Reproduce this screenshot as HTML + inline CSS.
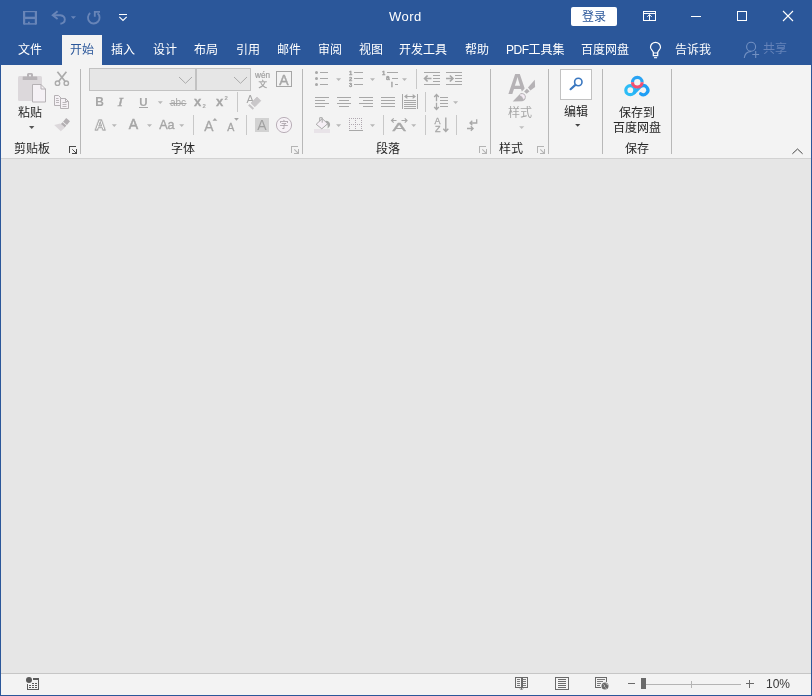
<!DOCTYPE html>
<html lang="zh-CN">
<head>
<meta charset="utf-8">
<title>Word</title>
<style>
html,body{margin:0;padding:0;}
body{width:812px;height:696px;overflow:hidden;position:relative;background:#e6e6e6;
  font-family:"Liberation Sans","Noto Sans CJK SC",sans-serif;font-size:12px;color:#262626;}
#win{position:absolute;left:0;top:0;width:812px;height:696px;overflow:hidden;}
.abs,.t,.g{position:absolute;}
.t{white-space:nowrap;line-height:16px;height:16px;font-size:12px;will-change:transform;}
#head{left:0;top:0;width:812px;height:65px;background:#2b579a;}
#ribbon{left:1px;top:65px;width:810px;height:93px;background:#f3f3f3;border-bottom:1px solid #d2d2d2;}
#doc{left:1px;top:159px;width:810px;height:513px;background:#e6e6e6;}
#status{left:1px;top:673px;width:810px;height:22px;background:#f3f3f3;border-top:1px solid #c6c6c6;}
#bl,#br,#bb{background:#2b579a;}
#bl{left:0;top:0;width:1px;height:696px;}
#br{left:811px;top:0;width:1px;height:696px;}
#bb{left:0;top:695px;width:812px;height:1px;}
.tab{color:#fff;top:42px;}
#tabsel{left:62px;top:35px;width:40px;height:31px;background:#f3f3f3;}
.sep{width:1px;background:#b8b8b8;top:69px;height:85px;}
.gl{top:141px;color:#262626;}
.dis{color:#a6a6a6;}
svg{position:absolute;overflow:visible;}
</style>
</head>
<body>
<div id="win">
  <div id="head" class="abs"></div>
  <div id="ribbon" class="abs"></div>
  <div id="doc" class="abs"></div>
  <div id="status" class="abs"></div>

  <!-- title bar -->
  <div class="t" style="left:389px;top:8.7px;color:#fff;font-size:13px;letter-spacing:0.5px;">Word</div>
  <div class="abs" style="left:571px;top:7px;width:46px;height:19px;background:#fff;border-radius:2px;"></div>
  <div class="t" style="left:582px;top:9px;color:#2b579a;">登录</div>

  <!-- tabs -->
  <div id="tabsel" class="abs"></div>
  <div class="t tab" style="left:18px;">文件</div>
  <div class="t tab" style="left:70px;color:#2b579a;">开始</div>
  <div class="t tab" style="left:111px;">插入</div>
  <div class="t tab" style="left:153px;">设计</div>
  <div class="t tab" style="left:194px;">布局</div>
  <div class="t tab" style="left:236px;">引用</div>
  <div class="t tab" style="left:277px;">邮件</div>
  <div class="t tab" style="left:318px;">审阅</div>
  <div class="t tab" style="left:359px;">视图</div>
  <div class="t tab" style="left:399px;">开发工具</div>
  <div class="t tab" style="left:465px;">帮助</div>
  <div class="t tab" style="left:506px;"><span style="letter-spacing:-0.500px">PDF</span>工具集</div>
  <div class="t tab" style="left:581px;">百度网盘</div>
  <div class="t tab" style="left:675px;">告诉我</div>
  <div class="t tab" style="left:763px;top:41px;color:#6583b9;">共享</div>

  <!-- group separators -->
  <div class="abs sep" style="left:80px;"></div>
  <div class="abs sep" style="left:302px;"></div>
  <div class="abs sep" style="left:490px;"></div>
  <div class="abs sep" style="left:548px;"></div>
  <div class="abs sep" style="left:602px;"></div>
  <div class="abs sep" style="left:671px;"></div>

  <!-- group labels -->
  <div class="t gl" style="left:14px;">剪贴板</div>
  <div class="t gl" style="left:171px;">字体</div>
  <div class="t gl" style="left:376px;">段落</div>
  <div class="t gl" style="left:499px;">样式</div>
  <div class="t gl" style="left:625px;">保存</div>

  <!-- big buttons text -->
  <div class="t" style="left:18px;top:105px;">粘贴</div>
  <div class="t dis" style="left:508px;top:105px;">样式</div>
  <div class="t" style="left:564px;top:104px;">编辑</div>
  <div class="t" style="left:619px;top:105px;">保存到</div>
  <div class="t" style="left:613px;top:120px;">百度网盘</div>

  <!-- status -->
  <div class="t" style="left:766px;top:676px;color:#383838;">10%</div>


  <!-- icons overlay -->
  <svg width="812" height="696" viewBox="0 0 812 696" style="left:0;top:0;">
    <!-- QAT -->
    <g id="qat" fill="none" stroke="#6885b8" stroke-width="1.6">
      <path d="M24.1 11v13.6M35.9 11v13.6" stroke-width="2.2"/>
      <path d="M23 11.6h14" stroke-width="1.2"/>
      <path d="M24 17.9h12" stroke-width="2.4"/>
      <path d="M24 23.9h12" stroke-width="1.5"/>
      <path d="M28.9 21.7v2" stroke-width="1.8"/>
      <!-- undo -->
      <path d="M57.600 11.200L52.700 15.200L57.600 19.100" stroke-width="1.900"/>
      <path d="M53 15.200h7.400a5.200 4.300 0 0 1 0 8.500" stroke-width="1.900"/>
      <path d="M70.8 16.2h5.2l-2.6 2.8z" fill="#6885b8" stroke="none"/>
      <!-- redo -->
      <path d="M90.200 13.100a5.800 5.800 0 1 0 7.400 0.200" stroke-width="1.850"/>
      <path d="M100 11.800h-5.200v5" stroke-width="1.850"/>
    </g>
    <g fill="none" stroke="#fff" stroke-width="1.1">
      <path d="M119 14.5h8" shape-rendering="crispEdges"/>
      <path d="M119.3 16.9l3.7 3.6l3.7-3.6"/>
    </g>
    <!-- window controls -->
    <g fill="none" stroke="#fff" stroke-width="1" shape-rendering="crispEdges">
      <path d="M643.5 11.5h12v9h-12z"/>
      <path d="M643 13.5h13"/>
      <path d="M691 16.5h10"/>
      <path d="M737.5 11.5h9v9h-9z"/>
    </g>
    <g fill="none" stroke="#fff" stroke-width="1">
      <path d="M649.5 20v-5.4M647.3 16.8l2.2-2.2l2.2 2.2"/>
      <path d="M783 11l10 10M793 11l-10 10" stroke-width="1.1"/>
    </g>
  </svg>

  <!-- tab row icons -->
  <svg width="812" height="696" viewBox="0 0 812 696" style="left:0;top:0;">
    <g fill="none" stroke="#fff" stroke-width="1.2">
      <path d="M653.400 53.200v-0.600c0-1.800-2.900-3-2.900-5.300a5 5 0 0 1 10 0c0 2.300-2.900 3.500-2.900 5.300v0.600"/>
      <path d="M653.300 53h4.400v2.700h-4.400z"/>
      <path d="M654 57.700h3.100" stroke-width="1.100"/>
    </g>
    <g fill="none" stroke="#7290c2" stroke-width="1.1">
      <circle cx="751.100" cy="46.700" r="4.500"/>
      <path d="M744.300 58c0.300-3.600 2.600-6.200 6.800-6.600"/>
      <path d="M752.300 54.500h6.800M755.700 51.100v6.800"/>
    </g>
  </svg>

  <!-- clipboard group icons -->
  <svg width="812" height="696" viewBox="0 0 812 696" style="left:0;top:0;">
    <rect x="18" y="76" width="24" height="25" rx="1.500" fill="#dcd8db"/>
    <path d="M27 76.500v-2a1.500 1.500 0 0 1 1.500-1.500h3a1.500 1.500 0 0 1 1.500 1.500v2h3.500a0.800 0.800 0 0 1 0.800 0.800v2.700h-14.600v-2.700a0.800 0.800 0 0 1 0.800-0.800z" fill="#b8b4b7"/>
    <circle cx="30" cy="75.600" r="1" fill="#f3f3f3"/>
    <path d="M32.500 84.500h8.500l4.500 4.500v13h-13z" fill="#f5f1f5" stroke="#b5b1b4" stroke-width="1"/>
    <path d="M41 84.500v4.500h4.500" fill="none" stroke="#b5b1b4" stroke-width="1"/>
    <path d="M29 126h5.400l-2.700 2.900z" fill="#555"/>
    <!-- scissors -->
    <g fill="none" stroke="#ababab" stroke-width="1.400">
      <circle cx="57.500" cy="83.200" r="2.200"/>
      <circle cx="66.300" cy="83.200" r="2.200"/>
      <path d="M58.800 81.300L66.400 71.700M65 81.300L57.400 71.700" stroke-width="1.700"/>
    </g>
    <!-- copy -->
    <g fill="#f5f1f5" stroke="#b5b1b4" stroke-width="1">
      <path d="M54.500 95.500h4l2.500 2.500v7.500h-6.500z"/>
      <path d="M60.500 98.500h5l3 3v7h-8z"/>
      <path d="M65.500 98.500v3h3" fill="none"/>
      <path d="M56 98.500h2.500M56 100.500h3M56 102.500h3M62.500 102.500h4M62.500 104.500h4M62.500 106.500h4" fill="none" stroke="#bcb8bb"/>
    </g>
    <!-- format painter -->
    <path d="M66.200 118l3.800 3.200-3.100 3.700-3.800-3.200z" fill="#b3afb2"/>
    <path d="M62.500 122.200l3.900 3.300-1.800 2.100-3.900-3.300z" fill="#b3afb2"/>
    <path d="M60.300 123.500l4.700 4-4.200 3.800-6.600-6.300z" fill="#dcd8db"/>
    <!-- launchers -->
    <g fill="none" stroke="#4a4a4a" stroke-width="1" shape-rendering="crispEdges">
      <path d="M69.500 153v-6.500h6"/>
      <path d="M76.500 149v4.500h-4.500"/>
    </g>
    <path d="M72.300 149.300l3.800 3.800" stroke="#4a4a4a" stroke-width="1" fill="none"/>
    <g fill="none" stroke="#b4b4b4" stroke-width="1" shape-rendering="crispEdges">
      <path d="M291.500 153v-6.500h6M298.500 149v4.500h-4.500"/>
      <path d="M479.500 153v-6.500h6M486.500 149v4.500h-4.500"/>
      <path d="M537.500 153v-6.500h6M544.500 149v4.500h-4.500"/>
    </g>
    <g fill="none" stroke="#b4b4b4" stroke-width="1.100">
      <path d="M294.300 149.300l3.800 3.800M482.300 149.300l3.800 3.800M540.300 149.300l3.800 3.800"/>
    </g>
    <path d="M792.400 153.800l5.100-4.800l5.100 4.800" fill="none" stroke="#3a3a3a" stroke-width="0.950"/>
  </svg>

  <!-- font group -->
  <div class="abs" style="left:89px;top:68px;width:105px;height:21px;background:#e6e6e6;border:1px solid #c2c2c2;"></div>
  <div class="abs" style="left:196px;top:68px;width:53px;height:21px;background:#e6e6e6;border:1px solid #c2c2c2;"></div>
  <svg width="812" height="696" viewBox="0 0 812 696" style="left:0;top:0;" font-family="'Liberation Sans','Noto Sans CJK SC',sans-serif">
    <g fill="none" stroke="#ababab" stroke-width="1">
      <path d="M179 77l6.500 6.300l6.500-6.300"/>
      <path d="M234 77l6.500 6.300l6.500-6.300"/>
    </g>
    <g fill="#a6a6a6">
      <text x="95.300" y="106" font-size="12" font-weight="bold">B</text>
      <text transform="translate(117.800 106) scale(1.250 1)" font-size="12.500" stroke="#a6a6a6" stroke-width="0.350" font-style="italic" font-family="'Liberation Serif',serif">I</text>
      <text x="139.200" y="105.800" font-size="11.500" font-weight="bold">U</text>
      <rect x="139" y="107" width="9" height="1"/>
      <text x="170" y="106" font-size="10">abc</text>
      <rect x="169.500" y="103" width="17" height="1"/>
      <text x="194" y="106" font-size="13" font-weight="bold" stroke="#a6a6a6" stroke-width="0.300">x</text>
      <text x="202.500" y="108.300" font-size="6" font-weight="bold">2</text>
      <text x="216" y="106" font-size="13" font-weight="bold" stroke="#a6a6a6" stroke-width="0.300">x</text>
      <text x="224.500" y="100.300" font-size="6" font-weight="bold">2</text>
      <text x="128.700" y="129.400" font-size="14" stroke="#a6a6a6" stroke-width="0.500">A</text>
      <text x="159.200" y="129.400" font-size="12.600" stroke="#a6a6a6" stroke-width="0.350">Aa</text>
      <text x="204.300" y="130.800" font-size="13.800" stroke="#a6a6a6" stroke-width="0.300">A</text>
      <text x="227.200" y="130.800" font-size="10.600" stroke="#a6a6a6" stroke-width="0.300">A</text>
      <path d="M212.500 120.800h4.800l-2.400-2.800z"/>
      <path d="M234.100 118h4.800l-2.400 2.800z"/>
    </g>
    <text x="95" y="129.600" font-size="14.500" font-weight="bold" fill="#ffffff" stroke="#dedede" stroke-width="2.200" stroke-linejoin="round">A</text><text x="95" y="129.600" font-size="14.500" font-weight="bold" fill="#fdfdfd" stroke="#a4a4a4" stroke-width="0.800">A</text>
    <g fill="#b8b8b8">
      <path d="M157.800 101.300h5l-2.500 2.700z"/>
      <path d="M111.800 124.300h5l-2.500 2.700z"/>
      <path d="M147 124.300h5l-2.500 2.700z"/>
      <path d="M179.200 124.300h5l-2.500 2.700z"/>
    </g>
    <g fill="none" stroke="#c8c8c8" stroke-width="1" shape-rendering="crispEdges">
      <path d="M237.500 92v20M193.500 115v20M246.500 115v20"/>
    </g>
    <!-- phonetic guide -->
    <g fill="#a0a0a0">
      <text x="255" y="78" font-size="8.200" stroke="#a0a0a0" stroke-width="0.200">wén</text>
      <text x="258.600" y="86.600" font-size="8.500" stroke="#a0a0a0" stroke-width="0.250">文</text>
    </g>
    <!-- char border -->
    <rect x="276.500" y="71.500" width="15" height="15" fill="none" stroke="#a6a6a6" stroke-width="1" shape-rendering="crispEdges"/>
    <text x="284" y="85" font-size="14" fill="#a6a6a6" stroke="#a6a6a6" stroke-width="0.400" text-anchor="middle">A</text>
    <!-- clear formatting -->
    <text x="246.600" y="102.900" font-size="11" fill="#a6a6a6">A</text>
    <path d="M257 97l3.800 3.700-6 6.100-3.800-3.700z" fill="#c9c7c9" stroke="#c9c7c9" stroke-width="0.800" stroke-linejoin="round"/>
    <path d="M251 102l-2 1.500 1.500 1.500z" fill="#f3f3f3"/>
    <path d="M249.500 104l4.600 4.200-1.400 1.500-4.600-4.200z" fill="#c6c4c6"/>
    <!-- char shading -->
    <rect x="255" y="118" width="14" height="14" fill="#d2d2d2"/>
    <text x="262" y="130" font-size="14" fill="#a0a0a0" text-anchor="middle">A</text>
    <!-- enclosed char -->
    <circle cx="284" cy="125" r="7.600" fill="#f6f1f6" stroke="#b9afb8" stroke-width="1"/>
    <text x="284" y="128.400" font-size="9" fill="#a49ca3" text-anchor="middle">字</text>
  </svg>

  <!-- paragraph group -->
  <svg width="812" height="696" viewBox="0 0 812 696" style="left:0;top:0;" font-family="'Liberation Sans','Noto Sans CJK SC',sans-serif">
    <g fill="#a8a8a8">
      <circle cx="316.500" cy="72.500" r="1.500"/><circle cx="316.500" cy="78.500" r="1.500"/><circle cx="316.500" cy="84.500" r="1.500"/>
    </g>
    <g fill="none" stroke="#a8a8a8" stroke-width="1" shape-rendering="crispEdges">
      <path d="M320 72.500h8M320 78.500h8M320 84.500h8"/>
      <path d="M354 72.500h9M354 78.500h9M354 84.500h9"/>
      <path d="M387 72.500h11M392 78.500h6M395 84.500h3"/>
      <!-- align -->
      <path d="M315 97.500h14M315 100.500h10M315 103.500h14M315 106.500h10"/>
      <path d="M337 97.500h14M339 100.500h10M337 103.500h14M339 106.500h10"/>
      <path d="M359 97.500h14M363 100.500h10M359 103.500h14M363 106.500h10"/>
      <path d="M381 97.500h14M381 100.500h14M381 103.500h14M381 106.500h14"/>
      <!-- distributed -->
      <path d="M402.500 94v15M417.500 94v15"/>
      <path d="M404 100.500h12M404 102.500h12M404 104.500h12M404 106.500h12M404 108.500h12"/>
      <!-- indents -->
      <path d="M424 72.500h16M433 75.500h7M433 78.500h7M433 81.500h7M424 84.500h16"/>
      <path d="M446 72.500h16M455 75.500h7M455 78.500h7M455 81.500h7M446 84.500h16"/>
      <!-- line spacing -->
      <path d="M440 97.500h8M440 100.500h8M440 103.500h8M440 106.500h8"/>
      <!-- small seps -->
      <path d="M416.500 69v20M425.500 92v20M383.500 115v20M425.500 115v20M456.500 115v20" stroke="#c8c8c8"/>
      <!-- borders bottom line -->
      <path d="M349 130.500h13.500" />
    </g>
    <g fill="#a0a0a0" stroke="#a0a0a0" stroke-width="0.350" font-size="5.800" font-weight="bold">
      <text x="348.900" y="74.800">1</text><text x="348.900" y="80.800">2</text><text x="348.900" y="86.800">3</text>
      <text x="381.900" y="74.800">1</text><text x="386" y="80.300" font-size="6.500">a</text><text x="390.900" y="86.800" font-size="6.500">i</text>
    </g>
    <g fill="#b8b8b8">
      <path d="M336.100 78.300h5l-2.500 2.700z"/>
      <path d="M370 78.300h5l-2.500 2.700z"/>
      <path d="M402 78.300h5l-2.500 2.700z"/>
      <path d="M453.100 101.300h5l-2.500 2.700z"/>
      <path d="M336.100 124.300h5l-2.500 2.700z"/>
      <path d="M370 124.300h5l-2.500 2.700z"/>
      <path d="M411.200 124.300h5l-2.500 2.700z"/>
    </g>
    <g fill="none" stroke="#a8a8a8" stroke-width="1.200">
      <!-- distributed arrow -->
      <path d="M405 96.500h10" stroke-width="1"/><path d="M404 96.500l3.300-2.600v5.200zM416 96.500l-3.300-2.600v5.200z" fill="#a8a8a8" stroke="none"/>
      <!-- indent arrows -->
      <path d="M425 78.500h6.500M427.600 75.500l-3 3l3 3" stroke-width="1.700"/>
      <path d="M446 78.500h6.500M449.900 75.500l3 3l-3 3" stroke-width="1.700"/>
      <!-- line spacing arrows -->
      <path d="M436.500 94.500v6.800M436.500 102.700v6.800M434.200 97l2.300-2.500l2.300 2.500M434.200 107l2.300 2.500l2.300-2.500" stroke-width="1.300"/>
      <!-- sort arrow -->
      <path d="M445.800 117.500v14M443.300 128.800l2.500 2.700l2.500-2.700" stroke-width="1.400"/>
      <!-- show marks -->
      <path d="M476.700 119.300v3.700h-6.500M472.300 120.800l-2.300 2.200l2.300 2.200" stroke-width="1.300"/>
      <path d="M467 128.500h6M470.800 126.300l2.300 2.200l-2.300 2.200" stroke-width="1.300"/>
      <!-- char scaling arrows -->
      <path d="M391.500 120.500h5M393.700 118.300l-2.200 2.200l2.200 2.200M401.500 120.500h5.500M404.800 118.300l2.200 2.200l-2.200 2.200" stroke-width="1.200"/>
    </g>
    <g fill="#a8a8a8">
      <text x="434.600" y="123.700" font-size="9" stroke="#a8a8a8" stroke-width="0.300">A</text>
      <text x="434.900" y="132" font-size="9" stroke="#a8a8a8" stroke-width="0.300">Z</text>
      <text transform="translate(392.600 130.800) scale(1.850 1)" font-size="10.800" stroke="#a8a8a8" stroke-width="0.300">A</text>
    </g>
    <!-- shading bucket -->
    <rect x="314" y="129" width="16" height="4" fill="#e8e3e8"/>
    <path d="M316.200 124.300l6-5.700l5.500 5.100l-5.900 5.100z" fill="#f6eff6" stroke="#a8a8a8" stroke-width="1"/>
    <path d="M319.700 121.300v-3.600h2.500v5" fill="none" stroke="#a8a8a8" stroke-width="1"/>
    <path d="M325.500 120.800c2.700-0.200 4.800 1.500 4.600 4.200c-0.200 1.300-1.400 2.600-2.600 3.400c0.500-1.800 0.200-3.400-0.500-4.600z" fill="#a8a8a8"/>
    <!-- borders dotted -->
    <g fill="none" stroke="#b0a8b0" stroke-width="1" stroke-dasharray="1 1" shape-rendering="crispEdges">
      <path d="M349 118.500h14M349 124.500h14M349.500 118v12M355.500 118v12M361.500 118v12"/>
    </g>
  </svg>

  <!-- styles / editing / save -->
  <div class="abs" style="left:560px;top:69px;width:30px;height:29px;background:#fff;border:1px solid #c2c2c2;"></div>
  <svg width="812" height="696" viewBox="0 0 812 696" style="left:0;top:0;" font-family="'Liberation Sans','Noto Sans CJK SC',sans-serif">
    <text transform="translate(507.800 93.700) scale(0.900 1)" font-size="30" font-weight="bold" fill="#b5b2b5">A</text>
    <path d="M527.200 85.800h4v10h-13.200z" fill="#f3f3f3"/>
    <path d="M534.800 79.700l0.300 7.200-4.700 3.500-2.400-3z" fill="#b5b2b5"/>
    <path d="M526.900 88.800l2.700 2.400-3 2.500-2.500-2.200z" fill="#b5b2b5"/>
    <path d="M520.900 93.100c2-0.500 4.500 1 4.900 3.300 0.300 2.500-1.500 4.500-3.600 4.900l-9.500 0.100z" fill="#b5b2b5"/>
    <path d="M520 95c1.300-1.200 3.800-0.800 4.500 1 0.500 1.200 0.100 2.400-0.900 3.100-0.600-1.800-1.700-3.300-3.600-4.100z" fill="#f5ecf5" stroke="#f5ecf5" stroke-width="0.600"/>
    <path d="M519.100 126.300h5.200l-2.600 2.800z" fill="#c0c0c0"/>
    <!-- find -->
    <circle cx="578.300" cy="82" r="3.700" fill="none" stroke="#3b78c0" stroke-width="1.600"/>
    <path d="M575.400 84.900l-4.800 4.300" stroke="#3b78c0" stroke-width="2.200" stroke-linecap="round"/>
    <path d="M575.100 124h5.200l-2.600 2.800z" fill="#444"/>
    <!-- baidu netdisk -->
    <circle cx="630.300" cy="90.200" r="4.500" fill="none" stroke="#2cbcf6" stroke-width="3.200"/>
    <path d="M633.600 93.400l7-7" stroke="#27b0f5" stroke-width="3.200" fill="none"/>
    <path d="M640.600 93.700a4.500 4.500 0 1 0 0.800-7.600" fill="none" stroke="#1e9ef5" stroke-width="3.200" stroke-linecap="round"/>
    <path d="M632.500 82.200a4.800 4.800 0 0 1 9.600 0" fill="none" stroke="#2aa3f3" stroke-width="3.200"/>
    <path d="M632.500 82.200a4.800 4.800 0 0 0 9.600 0" fill="none" stroke="#f24e70" stroke-width="3.200"/>
  </svg>

  <!-- status bar icons -->
  <svg width="812" height="696" viewBox="0 0 812 696" style="left:0;top:0;">
    <circle cx="29" cy="680" r="3" fill="#5a5a5a"/>
    <g fill="none" stroke="#5a5a5a" shape-rendering="crispEdges">
      <path d="M33 679h6" stroke-width="2"/>
      <path d="M27.500 684v6M38.500 678v12M27 689.500h12" stroke-width="1"/>
      <path d="M32 683.500h2M35 683.500h2M29 685.500h2M32 685.500h2M35 685.500h2M29 687.500h2M32 687.500h2M35 687.500h2" stroke-width="1"/>
    </g>
    <!-- read mode -->
    <g fill="none" stroke="#6a6a6a" stroke-width="1" shape-rendering="crispEdges">
      <path d="M515.500 677.500h5.500v10h-5.500zM522 677.500h5.500v10h-5.500z"/>
      <path d="M521.500 678v11"/>
      <path d="M517 679.500h3M517 681.500h3M517 683.500h3M517 685.500h3M523 679.500h3M523 681.500h3M523 683.500h3M523 685.500h3" stroke="#7a7a7a"/>
      <!-- print layout -->
      <path d="M555.500 677.500h13v12h-13z"/>
      <path d="M558 679.500h8M558 681.500h8M558 683.500h8M558 685.500h8M558 687.500h8"/>
      <!-- web layout -->
      <path d="M601 677.500h-5.500v10h5.500M606.500 682v-4.500h-6"/>
      <path d="M597 679.500h8M597 681.500h6M597 683.500h4M597 685.500h3" stroke="#7a7a7a"/>
      <!-- zoom -->
      <path d="M628 683.500h7"/>
      <path d="M746 683.500h8M749.500 680v8"/>
      <path d="M646 684.500h95" stroke="#b4b4b4"/>
      <path d="M691.500 681v7" stroke="#b4b4b4"/>
    </g>
    <path d="M520 688.500l1.500 1.500l1.500-1.500" fill="none" stroke="#6a6a6a" stroke-width="1"/>
    <circle cx="605" cy="686" r="4.200" fill="#f3f3f3"/><circle cx="605" cy="686" r="3.500" fill="#6a6a6a"/>
    <path d="M603.500 684.500c1 0.500 1.500 1.500 0.500 2.500M606 683.300c0.500 1 1.500 1.500 2 1.200M605.500 687.500c0.500 0.500 1 1 0.500 1.800" fill="none" stroke="#e8e8e8" stroke-width="0.800"/>
    <rect x="641" y="678" width="5" height="11" fill="#6a6a6a"/>
  </svg>
  <div id="bl" class="abs"></div><div id="br" class="abs"></div><div id="bb" class="abs"></div>
</div>
</body>
</html>
